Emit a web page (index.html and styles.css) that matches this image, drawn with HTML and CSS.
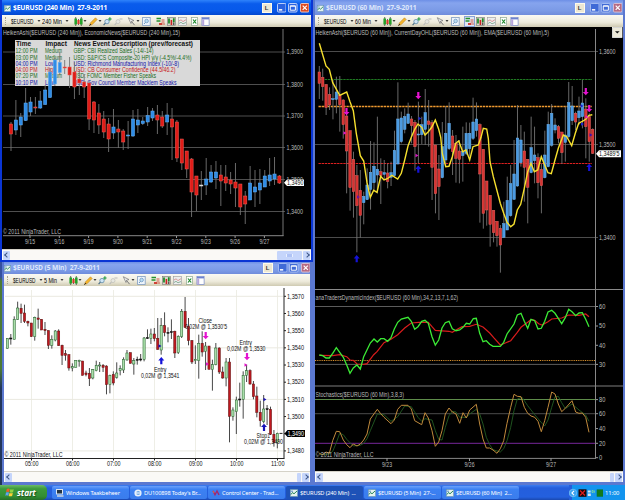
FILE: index.html
```html
<!DOCTYPE html>
<html lang="en">
<head>
<meta charset="utf-8">
<title>Trading desktop</title>
<link rel="stylesheet" href="styles.css">
</head>
<body>
<svg class="defs" aria-hidden="true">
  <symbol id="i-app" viewBox="0 0 8 8"><rect x=".3" y=".5" width="7.4" height="7" fill="#e4f2ee" stroke="#5f8fb0" stroke-width=".6"/><path d="M1 5.5 2.5 3.5 4 4.8 7 2" fill="none" stroke="#27855a"/><path d="M1 2.2h2" stroke="#3a70c0" stroke-width=".8"/></symbol>
  <symbol id="i-candle" viewBox="0 0 9 9"><path d="M1.7 0v9M7.3 0v9M4.5 2v6" stroke="#333" stroke-width=".7"/><path d="M.4 1.5h2.6v6H.4z" fill="#25a32a"/><path d="M3.4 3h2.2v4H3.4z" fill="#d43b2a"/><path d="M6 1.5h2.6v6H6z" fill="#25a32a"/></symbol>
  <symbol id="i-pencil" viewBox="0 0 9 9"><path d="M.6 8.4 1.3 6 6.5.8 8.2 2.5 3 7.7z" fill="#f4b52d" stroke="#b47a18" stroke-width=".5"/><path d="M.6 8.4 2 7z" stroke="#333"/></symbol>
  <symbol id="i-zin" viewBox="0 0 9 9"><circle cx="4" cy="4.6" r="2.2" fill="#cfe6f5" stroke="#5f8cab" stroke-width=".8"/><path d="M2.4 6.2.6 8.2" stroke="#4c6f88" stroke-width="1.2"/><path d="M5.2 2h3.4M6.9.3v3.4" stroke="#1d9a3f" stroke-width="1.1"/></symbol>
  <symbol id="i-zout" viewBox="0 0 9 9"><circle cx="4" cy="4.6" r="2" fill="#e8e8e2" stroke="#c3c3bb" stroke-width=".8"/><path d="M2.4 6.2.6 8.2" stroke="#bbb" stroke-width="1.1"/><path d="M5.5 2h3" stroke="#bbb"/></symbol>
  <symbol id="i-cursor" viewBox="0 0 9 9"><path d="M1.3.7 7 3.6 4.6 4.2 4 6.5z" fill="#eee" stroke="#777" stroke-width=".7"/><path d="m4.6 4.6 3 3.6" stroke="#777"/></symbol>
  <symbol id="i-find" viewBox="0 0 9 9"><rect x=".6" y=".5" width="7.6" height="8" fill="#eef5fc" stroke="#7f9cc0" stroke-width=".8"/><circle cx="4.6" cy="4" r="1.8" fill="#b9dcf2" stroke="#6894bd" stroke-width=".7"/><path d="M3.4 5.4 2 7" stroke="#6894bd"/></symbol>
  <symbol id="i-trade" viewBox="0 0 9 9"><path d="M.5 1.5H5M.5 4h4" stroke="#26912e" stroke-width="1.7"/><path d="M3 7h3.4" stroke="#cf3126" stroke-width="1.8"/><path d="M5.5 3h3M5.5 5h3M7 7h2" stroke="#cf5a46" stroke-width="1"/></symbol>
  <symbol id="i-bars" viewBox="0 0 9 9"><rect x=".4" y=".4" width="8.2" height="8.2" fill="#d8d8ca" stroke="#777" stroke-width=".6"/><path d="M2 1.5v5M6.8 1.2v4" stroke="#198b24" stroke-width="1.7"/><path d="M4.4 3v5" stroke="#c22" stroke-width="1.6"/><path d="M6.8 5.5V8" stroke="#222"/></symbol>
  <symbol id="i-line" viewBox="0 0 9 9"><rect x=".4" y=".4" width="8.2" height="8.2" fill="#eceeee" stroke="#999" stroke-width=".6"/><path d="M1 4 3 2.8 5 4.6 8 2.7" fill="none" stroke="#d28080" stroke-width=".8"/><path d="M1 6.5 3 5.3 5 6.8 8 5.5" fill="none" stroke="#74a184" stroke-width=".8"/></symbol>
  <symbol id="i-sheet" viewBox="0 0 9 9"><rect x="1.6" y=".6" width="6" height="7.8" fill="#fff" stroke="#8fa88f" stroke-width=".7"/><path d="m3 2.5 3.2 4M6.2 2.5 3 6.5" stroke="#1d8b2c" stroke-width="1.2"/></symbol>
  <symbol id="i-panel" viewBox="0 0 9 9"><rect x=".9" y=".6" width="7.2" height="7.8" fill="#fff" stroke="#7488c8" stroke-width=".7"/><path d="M1 1.6h7" stroke="#6d82ce" stroke-width="1.6"/><path d="M2.2 2.4v6" stroke="#b7a5dc" stroke-width="2"/></symbol>
</svg>

<main class="desktop">
  <section class="window active w240">
    <header class="titlebar"><svg class="app"><use href="#i-app"/></svg><h1>$EURUSD (240 Min)&nbsp; 27-9-2011</h1><div class="caption"></div></header>
    <div class="toolbar" data-interval="240 Min"></div>
    <svg class="chart" id="c240" viewBox="2 27 309 222"></svg>
    <div class="scroll"><i class="prev"></i><i class="thumb wide"></i><i class="next"></i></div>
  </section>
  <section class="window w5">
    <header class="titlebar"><svg class="app"><use href="#i-app"/></svg><h1>$EURUSD (5 Min)&nbsp; 27-9-2011</h1><div class="caption"></div></header>
    <div class="toolbar" data-interval="5 Min"></div>
    <svg class="chart light" id="c5" viewBox="4 286 306 185"></svg>
    <div class="scroll"><i class="prev"></i><i class="thumb"></i><i class="next"></i></div>
  </section>
  <section class="window w60">
    <header class="titlebar"><svg class="app"><use href="#i-app"/></svg><h1>$EURUSD (60 Min)&nbsp; 27-9-2011</h1><div class="caption"></div></header>
    <div class="toolbar" data-interval="60 Min"></div>
    <svg class="chart" id="c60" viewBox="315 27 308 444"></svg>
    <div class="scroll"><i class="prev"></i><i class="thumb"></i><i class="next"></i></div>
  </section>
</main>

<footer class="taskbar">
  <div class="start">
    <svg class="flag" viewBox="0 0 10 9"><path d="M1.8 1Q3.3.2 4.8 1L4.1 4Q2.6 3.3 1.1 4z" fill="#ee5b2b"/><path d="M5.3 1.2Q7 2 8.8 1.2L8 4.3Q6.3 5 4.6 4.3z" fill="#8ed343"/><path d="M1 4.6Q2.5 3.9 4 4.6L3.2 7.7Q1.8 7 .3 7.7z" fill="#5fa3f3"/><path d="M4.5 4.9Q6.2 5.6 7.9 4.9L7.1 7.9Q5.4 8.7 3.7 7.9z" fill="#fbd236"/></svg>
    <span>start</span>
  </div>
  <nav class="tasks">
    <div class="task"><svg viewBox="0 0 8 8"><rect x=".5" y=".5" width="6" height="4.5" fill="#234" stroke="#dde6ee"/><path d="M1 7h6.5" stroke="#cfd7dd" stroke-width="1.5"/></svg><span>Windows Taakbeheer</span></div>
    <div class="task"><svg viewBox="0 0 8 8"><circle cx="4" cy="4" r="3.6" fill="#e8f1fb"/><circle cx="4.2" cy="4" r="2" fill="#6aa4e0"/><path d="M2 4h4" stroke="#fff"/></svg><span>DU100898 Today's Br...</span></div>
    <div class="task"><svg viewBox="0 0 8 8"><path d="M1 1.8 3 5.8 5 2 7 6" fill="none" stroke="#a4286f" stroke-width="1.4"/><path d="M1 2 2 4" stroke="#e56e3b"/></svg><span>Control Center - Trad...</span></div>
    <div class="task pressed"><svg><use href="#i-app"/></svg><span>$EURUSD (240 Min) &nbsp;...</span></div>
    <div class="task"><svg><use href="#i-app"/></svg><span>$EURUSD (5 Min)&nbsp; 27-...</span></div>
    <div class="task"><svg><use href="#i-app"/></svg><span>$EURUSD (60 Min)&nbsp; 2...</span></div>
  </nav>
  <div class="tray">
    <svg viewBox="0 0 34 10"><circle cx="4" cy="5" r="3.8" fill="#3aa2ef" stroke="#8fd0fa" stroke-width=".6"/><path d="M5 2.8 2.9 5 5 7.2" fill="none" stroke="#fff" stroke-width="1.1"/><rect x="9.5" y="1.3" width="8" height="7.5" fill="#160608"/><path d="m11 2.5 5 5M16 2.5l-5 5" stroke="#d81b1b" stroke-width="1.3"/><path d="M18.8 2.5h2.8v2h-2.8zM18.8 5.5h3v2.5h-3z" fill="#d8e8f4"/><path d="M23 2.5h1.2v2H23zM25.4 2.5v2.3" fill="none" stroke="#8ee39a" stroke-width=".7"/><rect x="28" y="1.8" width="6" height="6.5" fill="#137a1c" stroke="#073" stroke-width=".6"/></svg>
    <span>11:00</span>
  </div>
</footer>
<script src="charts.js"></script>
</body>
</html>
```
FILE: styles.css
```css
* { box-sizing: border-box; }
body {
  margin: 0;
  width: 625px;
  height: 500px;
  overflow: hidden;
  display: flex;
  flex-direction: column;
  font-family: "Liberation Sans", Arial, sans-serif;
  font-size: 6px;
}
.defs { position: absolute; width: 0; height: 0; }
.desktop {
  position: relative;
  height: 485px;
  background: linear-gradient(#35509f 0 57%, #4c7a35 58% 76%, #22365c 80%);
}
.window {
  position: absolute;
  display: flex;
  flex-direction: column;
  border: solid #5b78d0;
  border-width: 0 3px 3px 2px;
  background: #7b98e4;
}
.window.active { border-color: #0a35d4; background: #0b5cee; }
.w240 { left: 0; top: 0; width: 313px; height: 262px; border-width: 0 2px 2px 2px; }
.w5 { left: 2px; top: 262px; width: 311px; height: 223px; }
.w60 { left: 313px; top: 0; width: 312px; height: 485px; border-width: 0 2px 3px 2px; }

.titlebar {
  display: flex;
  align-items: center;
  height: 15px;
  flex: none;
  padding: 1px 1px 0 2px;
  background: linear-gradient(#6d8fe6, #86a4ee 20%, #7b9ae6 70%, #6f8cdb);
  color: #dfe8fb;
}
.w5 .titlebar { height: 12px; padding: 0; }
.active .titlebar { background: linear-gradient(#2e83fb, #0a5cec 25%, #0759ea 70%, #0348cf); color: #fff; padding-right: 2px; }
.app { width: 7px; height: 7px; }
h1 {
  margin: 0 0 0 2px;
  font: bold 6.7px/10px "Open Sans", sans-serif;
  letter-spacing: -.12px;
  flex: 1;
  white-space: nowrap;
}
.caption { display: flex; align-items: center; gap: 2px; }
.caption b {
  width: 10px;
  height: 10px;
  margin-right: 3px;
  background: #ece7d2;
  border: 1px solid #fffbea;
  color: #333;
  font-size: 6px;
  line-height: 8px;
  text-align: center;
}
.caption svg { width: 9.5px; height: 9.5px; display: block; }
.caption .btn { fill: #3f6ad6; stroke: #a9bff2; }
.caption .close { fill: #b56a83; stroke: #dcc0d2; }
.active .btn { fill: #2a62e0; stroke: #c9d9fa; }
.active .close { fill: #dc4a22; stroke: #f6cfc2; }

.toolbar {
  display: flex;
  align-items: center;
  height: 12px;
  flex: none;
  padding-left: 3px;
  background: linear-gradient(#faf9f3, #eeebdc 60%, #cfcab2);
  color: #111;
  white-space: nowrap;
}
.grip { width: 2px; height: 8px; margin-right: 4px; border-left: 1px dotted #aaa690; }
.toolbar svg { width: 9px; height: 9px; flex: none; }
.toolbar .label { height: 9px; overflow: visible; }
.toolbar .label text { font-size: 6.5px; }
.toolbar .drop { width: 4px; height: 4px; }
.on { background: #dfe8f4; outline: 1px solid #8aa2d4; }

.chart { display: block; width: 100%; flex: 1; min-height: 0; background: #000; fill: #bcbcbc; }
.chart.light { background: #fff; fill: #111; }
.chart text { font-size: 6.4px; }

.scroll {
  display: flex;
  align-items: center;
  height: 11px;
  flex: none;
  padding: 1px;
  gap: 1px;
  background: #faf9f6;
  border-top: 1px solid #d5d2c8;
}
.scroll i { height: 9px; background: #c5d5fb; border-radius: 1px; }
.prev, .next { width: 7px; display: grid; place-items: center; }
.prev::before, .next::before {
  content: "";
  width: 3px;
  height: 3px;
  border: solid #3c5586;
  border-width: 0 0 1px 1px;
  transform: rotate(45deg);
}
.next::before { transform: rotate(225deg); }
.thumb { width: 4px; margin-left: auto; }
.thumb.wide { width: 25px; display: grid; place-items: center; }
.thumb.wide::before { content: ""; width: 5px; height: 3px; border: solid #e9f0ff; border-width: 0 1px; background: #b0c4f6; }

.taskbar {
  display: flex;
  height: 15px;
  background: linear-gradient(#3b7cf0, #245edc 20%, #2460de 80%, #1a48ae);
  color: #fff;
}
.start {
  width: 47px;
  display: flex;
  align-items: center;
  padding-left: 5px;
  gap: 2px;
  border-radius: 0 5px 5px 0;
  background: linear-gradient(#6cbc67, #3c9a3c 25%, #338e34 75%, #266f27);
}
.flag { width: 10px; height: 9px; }
.start span { font: italic bold 8.3px/12px "Open Sans", sans-serif; letter-spacing: -.1px; text-shadow: 1px 1px 1px #1c4f1c; }
.tasks { display: flex; gap: 1px; padding: 1px 0 1px 5px; }
.task {
  display: flex;
  align-items: center;
  gap: 2px;
  width: 77px;
  padding-left: 4px;
  border-radius: 2px;
  background: linear-gradient(#6ba0fa, #3c81f3 25%, #3a7cec);
  font-family: "Noto Sans", sans-serif;
  font-size: 5.7px;
  letter-spacing: -.17px;
  white-space: nowrap;
}
.task svg { width: 8px; height: 8px; flex: none; }
.pressed { background: #1e52b7; }
.tray {
  margin-left: auto;
  display: flex;
  align-items: center;
  width: 56px;
  gap: 2px;
  background: linear-gradient(90deg, #245edc 0 3px, #1394ee 3px);
  font-family: "Noto Sans", sans-serif;
}
.tray svg { width: 34px; height: 10px; flex: none; }
.tray span { font-size: 5.8px; letter-spacing: -.1px; }
```
FILE: charts.js
```js
const text = (x, y, s, len, extra = '') =>
  `<text x="${x}" y="${y}" ${len ? `textLength="${len}" lengthAdjust="spacingAndGlyphs"` : ''} ${extra}>${s}</text>`;
const line = (x1, y1, x2, y2, c, w = 1, extra = '') =>
  `<path d="M${x1} ${y1}L${x2} ${y2}" stroke="${c}" stroke-width="${w}" fill="none" ${extra}/>`;
const poly = (s, x0, y0, c, w) =>
  `<polyline fill="none" stroke="${c}" stroke-width="${w}" points="${s.trim().split(/\s+/).map(p => {
    const [x, y] = p.split(',');
    return (x0 + x / 3).toFixed(1) + ',' + (y0 + y / 3).toFixed(1);
  }).join(' ')}"/>`;
const arrow = (x, y, c, up) => up
  ? `<path d="M${x} ${y}l3 3.4h-1.9v3.9h-2.2v-3.9h-1.9z" fill="${c}"/>`
  : `<path d="M${x} ${y + 7.3}l-3 -3.4h1.9v-3.9h2.2v3.9h1.9z" fill="${c}"/>`;
const mark = (x, y, c) => `<path d="M${x - 1.5} ${y - 1.7}v3.4l3-1.7z" fill="${c}"/>`;

// Each candle: kind, body top, body bottom, high, low.
function candles(data, x0, step, y0, unit, style) {
  return data.trim().split(/\s*;\s*/).filter(Boolean).map((row, i) => {
    const [k, ...n] = row.split(' ');
    const [t, b, h = n[0], l = n[1]] = n;
    const Y = v => y0 + v * unit;
    const x = x0 + i * step;
    const [fill, edge] = style[k];
    const w = style.w;
    return line(x, Y(+h), x, Y(+l), style.wick, .9) +
      `<rect x="${x - w / 2}" y="${Y(+t)}" width="${w}" height="${Math.max(1, Y(+b) - Y(+t))}" fill="${fill}" stroke="${edge}" stroke-width="${style.sw}"/>`;
  }).join('');
}

const d240 = `R 124 134 122 151;B 120 130 100 135;B 117 125 113 137;B 103 120.5 88 121;B 102 112 97 116;R 107 108 97 114;
B 101 108 91 109;B 90 104.5 85 105;B 72 97.5 68 98;B 60 84 58 86;B 62.5 72.5 52 75;R 67 68 60 74;R 67 75 57 88;R 72 87 62 99;
R 79 83 70 95;R 82 87 74 98;R 83 119 81 130;R 102 120 101 133;R 113 125 104 134;R 119 132 111 138;R 124 139 118 152;
B 127 133 109 139;R 129 132 120 148;R 131 142 129 150;B 135 136 121 149;B 119 136 110 137;B 120 125 109 133;B 121 123.5 117 125;
B 115.5 122 107 126;B 111 118 108 121;R 115 120 105 134;R 117 126 111 128;B 115 122 103 135;R 119 127 108 160;R 122 158 120 162;
R 139 163 139 170;R 151 169 151 178;R 159 192 158 217;R 176 195 176 211;D 185 186 171 200;B 179 185 158 195;B 172 182 165 183;
B 172 178 161 189;R 175 181 165 206;R 177 183 165 191;R 180 184 172 194;R 182 188 163 207;R 184 207 184 215;R 196 204 191 224;
B 183 200 166 200;B 187 192 170 207;B 183 190 169 204;B 176 187 170 187;B 175 181 158 186;B 174 179 157 185;R 176 183 175 184`;

const d5 = `G 241 272;K 240 242 228 260;G 184 244 175 244;G 150 184 131 185;R 151 166 137 195;R 165 190 140 195;R 190 195 188 205;
R 195 236;G 178 236 176 248;R 180 184 152 212;R 184 216;R 214 218 192 231;R 218 262 217 273;G 244 262 232 272;G 219 246 216 250;
R 219 263 214 263;R 262 292 260 321;R 287 292 276 308;R 290 330 289 338;G 326 330 316 340;G 307 328;G 307 310 305 326;
R 309 352;R 345 350 338 355;R 346 362 330 384;G 335 360 333 364;G 322 338 308 340;G 321 324 312 342;R 322 328 318 342;
R 324 380 322 409;G 352 380 350 406;R 350 375 340 382;G 345 358 313 362;G 332 338 322 352;G 304 336 298 345;G 285 306 276 308;
R 284 316;G 308 318 300 350;K 304 306 296 320;K 303 305 288 310;G 240 304 237 310;K 239 241 214 242;G 228 242 212 258;
R 228 242 210 250;R 241 274 180 275;G 203 276 180 290;R 203 224 163 235;K 223 225 208 253;K 221 223 184 243;R 220 285 218 300;
G 235 284 232 288;G 160 236 153 240;R 160 208 117 210;R 206 248 180 262;R 248 312 246 318;G 304 308 262 318;G 256 308 230 362;
R 256 282 220 296;G 264 280 252 336;R 264 334;G 320 335 305 398;G 270 320 255 322;R 270 342 268 348;R 342 360 326 362;
G 312 360 300 385;R 312 475 300 553;G 456 475 448 488;G 426 461 416 528;K 423 425 374 446;G 352 424 340 482;G 338 352 320 372;
R 338 378 334 380;R 378 416 369 424;R 414 463 386 478;R 463 488 428 506;G 453 491 411 496;K 452 454 441 501;R 454 529 446 531;
R 529 554 516 566;G 526 553 524 571`;

const d60 = `R 216 250 198 297;R 232 260 206 302;R 254 322 252 345;R 284 315 262 330;B 296 299 240 358;B 276 298 230 340;
R 285 314 228 395;R 300 374 298 416;R 348 453 340 580;R 392 563 392 632;R 478 575 455 653;R 527 617 495 757;R 571 646 510 713;
B 589 608 575 673;B 555 599 505 600;B 517 568 423 629;B 499 548 427 572;B 508 525 350 580;R 515 527 475 612;B 518 523 480 540;
R 519 545 490 565;B 518 532 485 558;B 451 527 392 527;B 357 492 247 493;B 354 425 335 430;B 350 388 325 400;B 342 370 308 372;
R 357 377 348 430;R 367 440 360 512;B 402 404 305 490;B 374 404 350 432;B 338 388 267 435;R 363 373 300 440;R 368 502 360 600;
R 435 581 435 640;R 507 560 465 660;B 440 533 366 535;B 400 480 318 500;B 370 446 307 450;R 408 455 390 525;R 430 475 405 548;
R 453 478 420 550;B 455 467 380 545;B 400 460 367 465;B 400 446 368 470;B 366 415 293 420;B 357 392 307 410;R 374 522 370 668;
R 448 640 448 686;R 543 630 543 677;R 586 673 586 740;R 631 698 631 727;R 664 707 664 740;R 685 735 675 818;B 671 712 605 714;
B 601 690 530 690;B 551 647 495 650;B 522 598 420 600;B 414 558 315 560;B 420 488 375 500;R 453 502 395 605;R 478 562 478 670;
B 443 518 350 520;B 465 482 380 550;R 473 548 460 595;R 508 557 490 640;B 465 533 392 535;B 373 500 335 502;B 340 436 312 440;
B 375 390 355 400;R 380 415 375 430;R 396 458 396 492;B 405 427 320 485;B 308 410 246 415;B 318 362 258 375;R 340 366 335 390;
B 333 353 290 375;B 309 350 240 385;R 327 380 295 475;R 350 425 340 485;R 388 460 385 462`;

const dark = { R: ['#e01c18', '#ee5f57'], B: ['#2f8ce6', '#66b0f4'], D: ['#ddd', '#ddd'], wick: '#747474', w: 3.2, sw: .5 };
const dark60 = { ...dark, R: ['#d83231', '#e0625e'], B: ['#4a9ae2', '#6cb2ee'], w: 2.5 };
const light = { R: ['#c0181f', '#58100f'], G: ['#a9dea9', '#1d5a24'], K: ['#111', '#111'], wick: '#333', w: 2.2, sw: .5 };

// 240 minute chart with the economic news table
{
  let s = '';
  [[52, '1,3900'], [84.5, '1,3800'], [116, '1,3700'], [147.5, '1,3600'], [179.5, '1,3500'], [211.5, '1,3400']].forEach(([y, l]) => {
    s += line(3, y, 285, y, '#585858', .9) + text(286.5, y + 2.2, l, 16.5);
  });
  s += line(283, 29, 283, 236, '#777') + line(3, 235.7, 283.5, 235.7, '#888');
  ['15', '16', '19', '20', '21', '22', '23', '26', '27'].forEach((d, i) => {
    const x = 30 + i * 29.3;
    s += line(x, 236, x, 238, '#999') + text(x - 5, 243.7, '9/' + d, 10);
  });
  s += text(3, 35, 'HeikenAshi($EURUSD (240 Min)), EconomicNews($EURUSD (240 Min),15)', 177);
  s += text(3, 234.3, '© 2011 NinjaTrader, LLC', 58);
  s += '<rect x="15" y="40" width="185" height="46" fill="#d9d9d9"/>';
  const bold = 'font-weight="bold" fill="#111" style="font-size:6.8px"';
  s += text(16, 46.2, 'Time', 15, bold) + text(45.5, 46.2, 'Impact', 21.5, bold) + text(74, 46.2, 'News Event Description (prev/forecast)', 119, bold);
  [['12:00 PM', 'Medium', 'GBP: CBI Realized Sales (-14/-14)', 80, '#1a6b1a'],
   ['03:00 PM', 'Medium', 'USD: S&amp;P/CS Composite-20 HPI y/y (-4.5%/-4.4%)', 118, '#1a6b1a'],
   ['04:00 PM', 'Low', 'USD: Richmond Manufacturing Index (-10/-8)', 105.5, '#1414a8'],
   ['04:00 PM', 'High', 'USD: CB Consumer Confidence (44.5/46.2)', 102, '#c81818'],
   ['07:20 PM', 'Medium', 'USD: FOMC Member Fisher Speaks', 82.5, '#1a6b1a'],
   ['10:10 PM', 'Low', 'USD: Gov Council Member Macklem Speaks', 103, '#1414a8']].forEach(([t, im, d, w, c], i) => {
    const y = 53.2 + i * 6.3, f = `fill="${c}"`;
    s += text(15.5, y, t, 22, f) + text(45, y, im, { Medium: 17, Low: 10, High: 11 }[im], f) + text(73.5, y, d, w, f);
  });
  s += candles(d240, 11, 4.88, 0, 1, dark);
  s += '<path d="M284 182.7l3-3.3h17v6.6h-17z" fill="#fff"/>' + text(287, 185, '1,3490', 16.5, 'fill="#111"');
  document.getElementById('c240').innerHTML = s;
}

// 5 minute chart with trade executions
{
  let s = '';
  for (let i = 0; i < 7; i++) {
    const x = 31.5 + i * 41;
    s += line(x, 290, x, 458, '#eeeee6') + line(x, 458, x, 460.5, '#222') +
      text(x - 6.5, 466.3, String(5 + i).padStart(2, '0') + ':00', 13.5);
  }
  ['70', '60', '50', '40', '30', '20', '10', '00', '90', '80'].forEach((d, i) => {
    const y = 296.3 + i * 17.18;
    if (i % 3 === 0) s += line(5, y, 283, y, '#eae9e0');
    s += line(284, y, 286, y, '#222');
    if (d !== '90') s += text(287, y + 2.2, (i < 8 ? '1,35' : '1,34') + d, 17);
  });
  s += line(284, 288, 284, 458.5, '#222') + line(4, 458.5, 284.5, 458.5, '#222');
  s += text(4.5, 457, '© 2011 NinjaTrader, LLC', 58);
  s += candles(d5, 7.4, 3.417, 258, 1 / 3, light);
  s += line(279.5, 433.4, 282.5, 433.4, '#222');
  s += mark(160, 346, '#1a12b4') + mark(207.5, 364, '#e018c8') + mark(246, 365, '#e018c8') + mark(265, 399.5, '#1a12b4');
  s += arrow(205.7, 332, '#e512d0') + arrow(247, 353, '#e512d0') + arrow(161.3, 357, '#1512d8', 1) + arrow(264, 423.7, '#1512b8', 1);
  s += text(198.5, 323.2, 'Close', 13.5) + text(185, 329.4, "0,02M @ 1,3530'5", 42);
  s += text(239.5, 344.6, 'Entry', 12.5) + text(227, 350.8, '0,02M @ 1,3530', 38.5);
  s += text(154, 371.8, 'Entry', 12.5) + text(141, 378, '0,02M @ 1,3541', 38.5);
  s += text(256.5, 438, 'Stop1', 13.5) + text(244, 444.2, '0,02M @ 1,3490', 39);
  s += '<path d="M284.5 433.4l3-3.5h17.5v7h-17.5z" fill="#000"/>' + text(287.5, 435.7, '1,3490', 16.5, 'fill="#fff"');
  document.getElementById('c5').innerHTML = s;
}

// 60 minute chart with oscillators
{
  let s = '';
  [[51.5, '1,3600'], [144.5, '1,3500'], [237.5, '1,3400']].forEach(([y, l]) => {
    s += line(315, y, 598, y, '#555', .9) + text(599, y + 2.2, l, 16.5);
  });
  s += line(318.5, 79.5, 592, 79.5, '#1f7a22', 1.2, 'stroke-dasharray="2.4 .7"');
  s += line(318.5, 106.5, 592, 106.5, '#f09a30', 1.3, 'stroke-dasharray="2.4 .7"');
  s += line(318.5, 163.5, 592, 163.5, '#dd2020', 1.2, 'stroke-dasharray="2.4 .7"');
  s += candles(d60, 319.3, 3.417, 0, 1 / 3, dark60);
  s += poly(`22,130 42,198 52,208 62,248 83,286 104,276 114,305 124,332 133,400 145,467 155,483 165,548 175,592 185,571 195,577
    206,529 216,540 226,536 240,526 257,537 268,520 278,480 288,438 298,412 308,388 318,372 329,382 339,405 349,395 359,382 370,360
    380,388 386,412 391,460 401,500 411,499 421,470 431,430 440,423 452,455 462,450 473,480 483,440 499,435 507,412 514,385 524,387
    529,415 534,485 544,530 565,610 575,640 585,667 596,680 606,672 616,630 626,613 637,565 647,515 657,490 667,515 677,510
    688,470 698,495 708,518 718,521 729,480 739,445 754,405 764,410 779,437 790,400 800,370 811,364 821,358 831,346 841,344`,
    312, 0, '#f6e02e', 1.4);
  s += arrow(346.5, 108, '#e512d0') + arrow(418.3, 92, '#e512d0') + arrow(585.8, 88, '#e512d0') + arrow(589.2, 105, '#e512d0');
  s += arrow(356.7, 255, '#1512d8', 1) + arrow(418.3, 165.5, '#1512d8', 1) + arrow(589.2, 163.7, '#1512d8', 1);
  s += mark(345, 133, '#e018c8') + mark(417, 155.5, '#e018c8') + mark(587, 117, '#e018c8');
  s += mark(358.5, 197, '#6a12a4') + mark(420, 118.5, '#1a22d4') + mark(582, 106, '#1a22d4') + mark(582.5, 124, '#1a22d4') + mark(591, 135, '#3a12b4');
  s += text(315.5, 35, 'HeikenAshi($EURUSD (60 Min)), CurrentDayOHL($EURUSD (60 Min)), EMA($EURUSD (60 Min),5)', 233.5);

  s += line(315, 289.5, 623, 289.5, '#8a8a8a') + line(315, 386, 623, 386, '#555', 1.6);
  s += text(315.5, 300, 'anaTradersDynamicIndex($EURUSD (60 Min),34,2,13,7,1,62)', 142.5);
  s += line(315, 306.5, 595, 306.5, '#666', .9) + line(315, 364.4, 595, 364.4, '#666', .9);
  s += line(315, 360.5, 595, 360.5, '#d9902c', 1, 'stroke-dasharray="1 .8"');
  [[306.5, 60], [326, 50], [345.3, 40], [364.4, 30], [399.6, 80], [413.7, 60], [428.6, 40], [443.3, 20], [457.7, 0]].forEach(([y, l]) => {
    s += line(595, y, 598, y, '#999') + text(599, y + 2.2, l, l ? 6.3 : 3.2);
  });
  s += poly(`22,214 62,215 83,212 104,218 114,228 124,229 135,240 155,241 165,239 185,212 195,203 216,176 237,166 257,152 278,132
    298,117 320,115 349,115 360,128 370,139 411,142 421,145 432,138 450,128 473,127 493,121 513,129 533,147 545,161 565,183 580,177
    596,170 616,145 627,130 647,115 657,107 668,109 680,119 690,123 708,113 719,105 749,102 770,93 801,94 821,90 831,98`,
    312, 284, '#d81c1c', 1.2);
  s += poly(`22,213 32,215 42,222 52,222 62,208 73,191 94,220 104,243 114,268 124,252 135,243 145,255 155,218 175,177 186,165
    196,174 206,164 216,164 227,172 237,161 247,135 257,115 268,105 288,100 298,112 308,136 318,128 329,112 339,109 349,118 360,158
    370,183 380,168 390,132 400,116 411,112 421,134 432,140 443,138 453,130 463,118 473,120 484,104 493,103 503,148 513,173 523,170
    533,181 543,187 565,187 575,175 585,150 606,120 616,93 627,88 637,112 647,133 657,106 668,110 678,135 688,133 698,112 708,84
    719,79 729,88 739,103 749,119 760,101 770,76 780,83 791,95 801,87 811,86 821,106 831,128`, 312, 284, '#3bea35', 1.3);

  s += text(315.5, 396.6, 'Stochastics($EURUSD (60 Min),3,8,3)', 88.5);
  s += line(315, 399.5, 595, 399.5, '#5e8c4a') + line(315, 413.7, 595, 413.7, '#555', .9) + line(315, 443.4, 595, 443.4, '#5f1f7c', 1.2);
  s += poly(`22,512 52,510 62,502 73,476 83,448 94,452 104,466 124,486 145,484 155,478 165,464 175,440 186,414 196,390 216,392
    237,412 257,398 278,366 298,368 318,400 329,412 339,404 360,408 370,440 380,466 390,468 400,430 411,395 421,382 432,384 443,400
    463,400 473,390 493,376 503,390 513,420 523,460 533,482 543,497 565,504 575,494 585,470 596,430 606,380 616,345 630,340 647,365
    668,392 690,418 698,426 708,408 719,370 729,338 739,337 749,356 760,374 780,360 801,378 821,393 831,412`,
    312, 284, '#235c22', .9);
  s += poly(`22,508 32,512 42,504 52,508 62,470 73,442 83,443 94,468 104,482 114,491 124,480 135,486 145,480 155,468 165,450
    175,405 196,376 206,389 216,400 237,419 247,408 257,376 268,364 288,364 298,375 308,410 329,422 339,386 349,402 360,440 370,487
    380,474 390,440 400,390 411,372 421,384 432,390 443,418 453,386 463,402 473,378 493,361 503,420 513,465 523,492 533,492 543,498
    555,508 565,494 575,470 585,418 596,370 606,331 616,337 627,338 637,370 647,388 657,396 668,400 678,412 688,443 698,410 708,370
    719,324 729,330 739,360 749,383 760,373 780,350 791,384 801,388 811,387 821,400 831,445`, 312, 284, '#c08a3c', 1);
  s += line(595.5, 29, 595.5, 458.5, '#888') + line(315, 458.4, 596, 458.4, '#888');
  s += text(315.5, 457.4, '© 2011 NinjaTrader, LLC', 58);
  [[387, '9/23'], [469.5, '9/26'], [551, '9/27']].forEach(([x, l]) => {
    s += line(x, 458, x, 461, '#999') + text(x - 5, 467, l, 10);
  });
  s += '<path d="M596 153.7l3-3.5h22v7h-22z" fill="#fff"/>' + text(599, 156, "1,3489'5", 20.5, 'fill="#111"');
  s += '<rect x="612.5" y="27.5" width="9.5" height="10" fill="#ece9d8" stroke="#fff" stroke-width=".7"/><path d="M615 31.2h4.6l-2.3 2.4z" fill="#111"/>';
  document.getElementById('c60').innerHTML = s;
}

// Toolbars and caption buttons: [symbol, left gap], "v" is a drop arrow.
const tools = [['candle', 4.5], ['v', 0], ['pencil', 2], ['v', 0], ['zin', 1.5], ['zout', 2], ['cursor', 4], ['v', 0],
  ['find', 1.8], ['trade', 5], ['bars', 2.5], ['line', 2], ['sheet', 2.3], ['panel', 2]];
const drop = '<svg class="drop" viewBox="0 0 4 4"><path d="M.5 1.2h3L2 2.8z"/></svg>';
const widths = { '240 Min': 20, '60 Min': 16, '5 Min': 13 };
document.querySelectorAll('.toolbar').forEach(bar => {
  const label = (s, w) => `<svg class="label" style="width:${w + 3}px">${text(0, 6.8, s, w)}</svg>`;
  const name = bar.dataset.interval;
  bar.innerHTML = '<span class="grip"></span>' + label('$EURUSD', 22.5) + drop + '&nbsp;' + label(name, widths[name]) + drop +
    tools.map(([t, g]) => t === 'v' ? drop
      : `<svg class="${t === 'trade' && name === '60 Min' ? 'on' : ''}" style="margin-left:${g}px"><use href="#i-${t}"/></svg>`).join('');
});
document.querySelectorAll('.caption').forEach(c => {
  const box = k => `<rect class="${k}" x=".5" y=".5" width="9" height="9" rx="1.2"/>`;
  c.innerHTML = `<b>L</b><svg viewBox="0 0 10 10">${box('btn')}<path d="M2 7.2h3.5" stroke="#fff" stroke-width="1.6"/></svg>
    <svg viewBox="0 0 10 10">${box('btn')}<path d="M2.4 3h5.4v4.6H2.4zM2.4 3.3h5.4" fill="none" stroke="#fff"/></svg>
    <svg viewBox="0 0 10 10">${box('close')}<path d="m2.8 2.8 4.4 4.4M7.2 2.8 2.8 7.2" stroke="#fff" stroke-width="1.3"/></svg>`;
});
```
